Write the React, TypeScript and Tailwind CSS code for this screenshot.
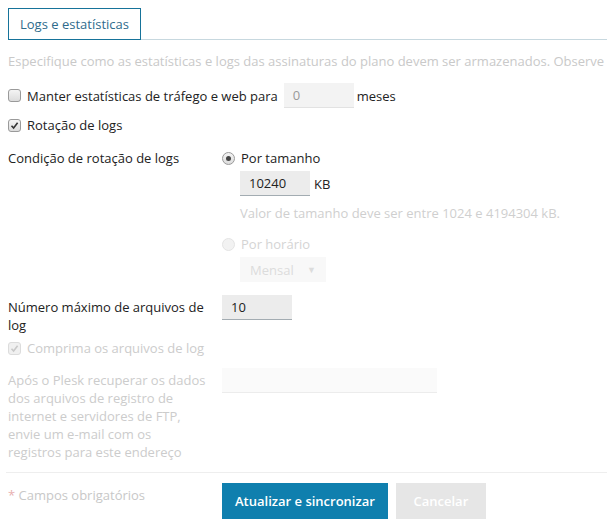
import React from "react";

function CheckBox({ checked, disabled }: { checked?: boolean; disabled?: boolean }) {
  return (
    <span
      className={`inline-flex items-center justify-center w-[13px] h-[13px] rounded-[3px] border shrink-0 ${
        disabled
          ? "border-[#dcdcdc] bg-[#f0f0f0]"
          : "border-[#9a9a9a] bg-gradient-to-b from-[#f4f4f4] to-[#dcdcdc]"
      }`}
    >
      {checked && (
        <svg width="9" height="9" viewBox="0 0 9 9">
          <path
            d="M1.5 4.8 L3.6 7 L7.6 1.8"
            fill="none"
            stroke={disabled ? "#c8c8c8" : "#333"}
            strokeWidth="1.6"
          />
        </svg>
      )}
    </span>
  );
}

function Radio({ checked, disabled }: { checked?: boolean; disabled?: boolean }) {
  return (
    <span
      className={`inline-flex items-center justify-center w-[13px] h-[13px] rounded-full border shrink-0 ${
        disabled
          ? "border-[#e4e4e4] bg-[#f2f2f2]"
          : "border-[#9a9a9a] bg-gradient-to-b from-[#f4f4f4] to-[#dcdcdc]"
      }`}
    >
      {checked && <span className="w-[5px] h-[5px] rounded-full bg-[#444]" />}
    </span>
  );
}

export default function App() {
  return (
    <div
      className="w-[607px] h-[527px] overflow-hidden bg-white text-[13px] leading-[18px] text-[#222]"
      style={{ fontFamily: '"Open Sans", sans-serif' }}
    >
      {/* tabs */}
      <div className="pt-[8px] pl-[8px] flex">
        <div className="h-[32px] px-[11px] flex items-center border border-[#16739a] text-[#2f6b8c]">
          Logs e estatísticas
        </div>
        <div className="flex-1 border-b border-[#c7d8df]" />
      </div>

      <div className="pl-[8px]">
        <p className="mt-[12px] pr-[4px] whitespace-nowrap overflow-hidden text-[#c9c9c9]">
          Especifique como as estatísticas e logs das assinaturas do plano devem ser armazenados. Observe
        </p>

        <div className="mt-[13px] flex items-center h-[25px]">
          <CheckBox />
          <span className="ml-[6px]">Manter estatísticas de tráfego e web para</span>
          <div className="ml-[6px] w-[70px] h-[25px] bg-[#f3f3f3] border-b border-[#e2e2e2] flex items-center px-[9px] text-[#999]">
            0
          </div>
          <span className="ml-[3px]">meses</span>
        </div>

        <div className="mt-[8px] flex items-center h-[18px]">
          <CheckBox checked />
          <span className="ml-[6px]">Rotação de logs</span>
        </div>

        <div className="mt-[15px] flex">
          <div className="w-[214px]">Condição de rotação de logs</div>
          <div className="flex flex-col">
            <div className="flex items-center h-[18px]">
              <Radio checked />
              <span className="ml-[6px]">Por tamanho</span>
            </div>
            <div className="ml-[18px] mt-[4px] flex items-center">
              <div className="w-[70px] h-[25px] bg-[#ececec] border-b border-[#a3acb2] flex items-center px-[9px] text-[#222]">
                10240
              </div>
              <span className="ml-[4px]">KB</span>
            </div>
            <div className="ml-[18px] mt-[8px] text-[#cfcfcf] whitespace-nowrap">
              Valor de tamanho deve ser entre 1024 e 4194304 kB.
            </div>
            <div className="mt-[13px] flex items-center h-[18px] text-[#d4d4d4]">
              <Radio disabled />
              <span className="ml-[6px]">Por horário</span>
            </div>
            <div className="ml-[18px] mt-[4px] w-[86px] h-[25px] bg-[#f8f8f8] flex items-center justify-between px-[10px] text-[#dcdcdc]">
              <span>Mensal</span>
              <span className="text-[9px]">▼</span>
            </div>
          </div>
        </div>

        <div className="mt-[13px] flex">
          <div className="w-[214px] pr-[16px] pt-[3px]">Número máximo de arquivos de log</div>
          <div className="w-[70px] h-[25px] bg-[#ececec] border-b border-[#a3acb2] flex items-center px-[9px]">
            10
          </div>
        </div>

        <div className="mt-[5px] flex items-center h-[18px] text-[#cccccc]">
          <CheckBox checked disabled />
          <span className="ml-[6px]">Comprima os arquivos de log</span>
        </div>

        <div className="mt-[11px] flex">
          <div className="w-[214px] pr-[16px] pt-[3px] text-[#cccccc]">
            Após o Plesk recuperar os dados dos arquivos de registro de internet e servidores de FTP, envie um e-mail com os registros para este endereço
          </div>
          <div className="w-[215px] h-[25px] bg-[#fafafa] border-b border-[#ececec]" />
        </div>
      </div>

      <div className="ml-[6px] mt-[11px] border-t border-[#eeeeee]" />

      <div className="pl-[8px] mt-[10px] flex">
        <div className="w-[214px] pt-[3px] text-[#c8c8c8]">
          <span className="text-[#e8b0b0]">*</span> Campos obrigatórios
        </div>
        <button className="h-[36px] px-[13px] bg-[#0f7fae] text-white font-semibold">
          Atualizar e sincronizar
        </button>
        <button className="ml-[8px] h-[36px] w-[90px] bg-[#e6e6e6] text-white font-semibold">
          Cancelar
        </button>
      </div>
    </div>
  );
}
